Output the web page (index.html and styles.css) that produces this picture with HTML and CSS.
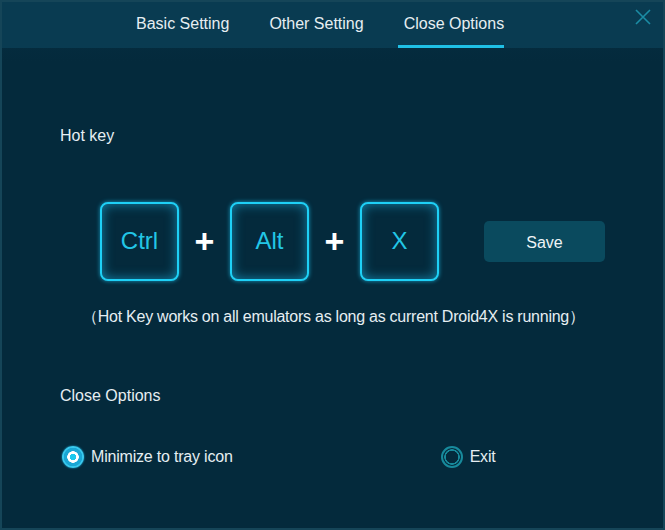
FILE: index.html
```html
<!DOCTYPE html>
<html>
<head>
<meta charset="utf-8">
<link rel="stylesheet" href="styles.css">
</head>
<body>
<div class="window">
  <div class="header">
    <nav class="tabs">
      <span class="tab">Basic Setting</span>
      <span class="tab">Other Setting</span>
      <span class="tab active">Close Options</span>
    </nav>
    <svg class="close" width="16" height="16" viewBox="0 0 16 16"><path d="M1 1L15 15M15 1L1 15" stroke="#1b8ca4" stroke-width="1.6" fill="none"/></svg>
  </div>
  <div class="content">
    <div class="label hot">Hot key</div>
    <div class="keys">
      <div class="key">Ctrl</div>
      <span class="plus">+</span>
      <div class="key">Alt</div>
      <span class="plus">+</span>
      <div class="key">X</div>
      <button class="save">Save</button>
    </div>
    <div class="note">（Hot Key works on all emulators as long as current Droid4X is running）</div>
    <div class="label close-label">Close Options</div>
    <div class="radios">
      <label class="radio"><span class="dot checked"></span>Minimize to tray icon</label>
      <label class="radio exit"><span class="dot"></span>Exit</label>
    </div>
  </div>
</div>
</body>
</html>
```

FILE: styles.css
```css
html, body { margin: 0; padding: 0; }
body { width: 665px; height: 530px; overflow: hidden; background: #042a3c; font-family: "Liberation Sans", Arial, sans-serif; }
.window { box-sizing: border-box; width: 665px; height: 530px; border: 2px solid #154558; background: linear-gradient(#062f43 0, #042a3c 60px, #042a3c 100%); display: flex; flex-direction: column; }
.header { position: relative; height: 46px; background: #093b51; flex: none; }
.tabs { display: flex; padding-left: 134px; gap: 40px; white-space: nowrap; }
.tab { color: #e6eef2; font-size: 16px; line-height: 18px; padding-top: 13px; box-sizing: border-box; height: 46px; }
.tab.active { border-bottom: 3px solid #1fc0e6; padding-left: 6px; margin-left: -6px; }
.close { position: absolute; right: 12px; top: 7px; }
.content { padding: 0 0 0 58px; color: #e6eef2; }
.label { font-size: 16px; line-height: 18px; }
.hot { margin-top: 79px; }
.keys { display: flex; align-items: center; margin-top: 56px; margin-left: 40px; height: 80px; }
.key { box-sizing: border-box; width: 79px; height: 79px; border: 2px solid #1ed0f6; border-radius: 8px; background: #042a3c; box-shadow: inset 0 0 12px rgba(30, 190, 240, 0.6), 0 0 4px rgba(30, 200, 245, 0.7); color: #22c6e6; font-size: 24px; display: flex; align-items: center; justify-content: center; }
.plus { color: #fff; font-size: 34px; font-weight: bold; width: 51px; text-align: center; line-height: 30px; }
.save { margin-left: 45px; width: 121px; height: 41px; border: none; border-radius: 5px; background: #0a4a5e; color: #eef4f6; font-family: inherit; font-size: 16px; padding: 4px 0 0; }
.note { margin-top: 27px; margin-left: 22px; font-size: 16px; line-height: 18px; letter-spacing: -0.25px; }
.close-label { margin-top: 61px; }
.radios { display: flex; margin-top: 41px; margin-left: 2px; }
.radio { display: flex; align-items: center; font-size: 16px; line-height: 18px; letter-spacing: -0.2px; }
.radio.exit { margin-left: 208px; }
.dot { box-sizing: border-box; width: 22px; height: 22px; border-radius: 50%; margin-right: 7px; border: 2px solid #178a9c; background: radial-gradient(circle, #042a3c 0 6px, #178a9c 6.5px 7.5px, #042a3c 8px); }
.dot.checked { border: none; background: radial-gradient(circle, #1ac8ee 0 3px, #ffffff 3.5px 5.5px, #1aa6d4 6px 9px, #39c9ee 9.5px 11px); box-shadow: 0 0 2px #1ab0e0; }
```
